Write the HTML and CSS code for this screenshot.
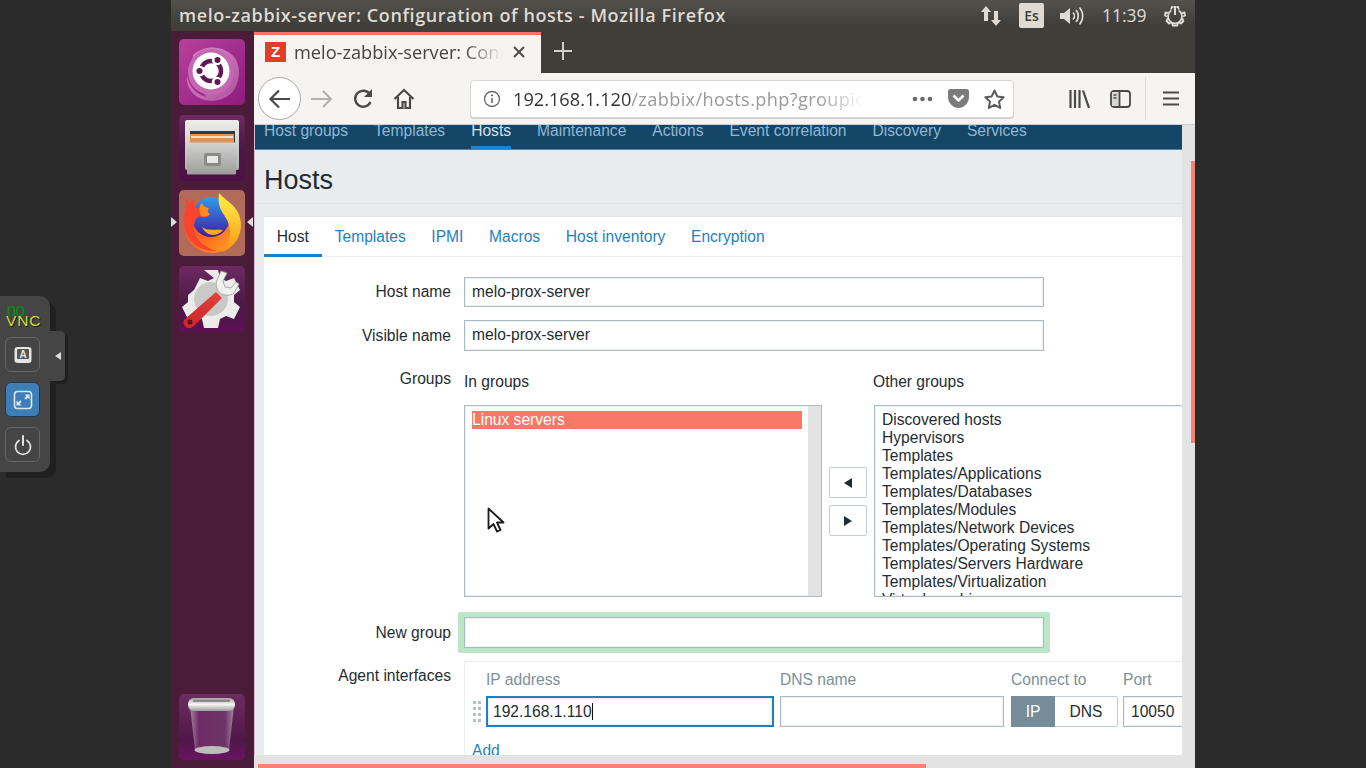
FILE: index.html
```html
<!DOCTYPE html>
<html lang="en">
<head>
<meta charset="utf-8">
<title>melo-zabbix-server: Configuration of hosts</title>
<link rel="stylesheet" href="styles.css">
</head>
<body>
<div class="outer-left">
  <aside class="vnc">
    <div class="vnc-logo"><span class="vnc-no">no</span><span class="vnc-name">VNC</span></div>
    <button class="vnc-btn"><svg width="24" height="24" viewBox="0 0 24 24"><rect x="3.500" y="4" width="17" height="16" rx="3" fill="#e4e4e4"/><rect x="6" y="6" width="12" height="10" rx="1" fill="#555"/><text x="12" y="14.500" class="vnc-key">A</text></svg></button>
    <button class="vnc-btn vnc-active"><svg width="24" height="24" viewBox="0 0 24 24"><rect x="3.500" y="3.500" width="17" height="17" rx="3" fill="none" stroke="#dbe6ef" stroke-width="1.600"/><path d="M13.500 6.500h5v5l-1.800-1.800-2 2-1.400-1.400 2-2zM10.500 17.500h-5v-5l1.800 1.800 2-2 1.400 1.400-2 2z" fill="#dbe6ef"/></svg></button>
    <button class="vnc-btn"><svg width="24" height="24" viewBox="0 0 24 24"><path d="M8 7.500a7.500 7.500 0 1 0 8 0" fill="none" stroke="#e0e0e0" stroke-width="1.800" stroke-linecap="round"/><path d="M12 3v9" stroke="#e0e0e0" stroke-width="2" stroke-linecap="round"/></svg></button>
    <div class="vnc-handle"><svg width="6" height="8" viewBox="0 0 6 8"><path d="M6 0v8L0 4z" fill="#ddd"/></svg></div>
  </aside>
</div>

<div class="screen">
  <header class="topbar">
    <div class="win-title">melo-zabbix-server: Configuration of hosts - Mozilla Firefox</div>
    <div class="tray">
      <svg class="tray-net" width="22" height="22" viewBox="0 0 22 22"><path d="M6 1l5 6H8v9H4V7H1zM14 6h4v9h3l-5 6-5-6h3z" fill="#dfdbd2"/></svg>
      <div class="tray-lang">Es</div>
      <svg class="tray-vol" width="27" height="20" viewBox="0 0 27 20"><path d="M1 7h4l6-5v16l-6-5H1z" fill="#dfdbd2"/><path d="M14 6.500a5 5 0 0 1 0 7M17 4a9 9 0 0 1 0 12M20.500 1.500a13 13 0 0 1 0 17" fill="none" stroke="#dfdbd2" stroke-width="1.700"/></svg>
      <div class="tray-clock">11:39</div>
      <svg class="tray-gear" width="22" height="22" viewBox="0 0 22 22"><path d="M7 4.500l1-2.500h1.500M15 4.500l-1-2.500h-1.500M4 8L1.500 7.500l-.5 3 2 1M18 8l2.500-.5.500 3-2 1M4 13l-1.500 3 2.500 2.500 2.500-1.500M18 13l1.500 3-2.500 2.500-2.500-1.500M8 17.500l.8 3h4.400l.8-3" fill="none" stroke="#dfdbd2" stroke-width="1.800"/><path d="M7.200 5.500a7 7 0 1 0 7.600 0" fill="none" stroke="#dfdbd2" stroke-width="1.800"/><path d="M11 1v9" stroke="#dfdbd2" stroke-width="2"/></svg>
    </div>
  </header>

  <div class="desk">
    <nav class="launcher">
      <div class="launch-top">
        <div class="launch-icon">
          <svg width="66" height="66" viewBox="0 0 66 66">
            <defs>
              <linearGradient id="ub" x1="0" y1="0" x2="1" y2="1"><stop offset="0" stop-color="#b8409c"/><stop offset="1" stop-color="#8d1c7e"/></linearGradient>
              <linearGradient id="ub2" x1="0" y1="0" x2="1" y2="1"><stop offset="0" stop-color="#dc8cc8"/><stop offset="1" stop-color="#b04fa0"/></linearGradient>
            </defs>
            <rect width="66" height="66" rx="5" fill="url(#ub)"/>
            <path d="M14 16C26 5 46 6 56 19c6 10 5 22-1 32-8 12-28 14-38 6-6-5-10-12-9-20 2 10 8 18 20 21C16 48 12 30 14 16z" fill="url(#ub2)"/>
            <circle cx="32" cy="33" r="23" fill="#c468b4"/>
            <circle cx="32" cy="32" r="18.500" fill="#fff"/>
            <circle cx="32" cy="32" r="10" fill="none" stroke="#5e1a58" stroke-width="4.500"/>
            <circle cx="21" cy="32" r="5.200" fill="#fff"/><circle cx="38" cy="21" r="5.200" fill="#fff"/><circle cx="38" cy="43" r="5.200" fill="#fff"/>
            <circle cx="20.500" cy="32" r="3" fill="#5e1a58"/><circle cx="38.500" cy="21" r="3" fill="#5e1a58"/><circle cx="38.500" cy="43" r="3" fill="#5e1a58"/>
          </svg>
        </div>
        <div class="launch-icon">
          <svg width="66" height="66" viewBox="0 0 66 66">
            <defs>
              <linearGradient id="fm" x1="0" y1="0" x2="0" y2="1"><stop offset="0" stop-color="#6e2a62"/><stop offset=".5" stop-color="#4a1845"/><stop offset="1" stop-color="#4d1046"/></linearGradient>
              <linearGradient id="dr" x1="0" y1="0" x2="0" y2="1"><stop offset="0" stop-color="#d2d2d0"/><stop offset="1" stop-color="#9c9c9a"/></linearGradient>
              <linearGradient id="fr" x1="0" y1="0" x2="0" y2="1"><stop offset="0" stop-color="#eeeeec"/><stop offset="1" stop-color="#b0b0ae"/></linearGradient>
            </defs>
            <rect width="66" height="66" rx="5" fill="url(#fm)"/>
            <rect x="6" y="5" width="54" height="50" rx="2" fill="url(#fr)"/>
            <rect x="11" y="16" width="45" height="14" fill="#3a3a38"/>
            <rect x="11" y="19" width="44" height="10" fill="#e29250"/>
            <rect x="12" y="21" width="42" height="2" fill="#f4e2cd"/>
            <rect x="8" y="27.500" width="49" height="32" rx="1" fill="url(#dr)"/>
            <rect x="25" y="38" width="17" height="13" rx="2" fill="#8b8b89"/>
            <rect x="28" y="41" width="11" height="7" rx="1" fill="#e8e8e6"/>
          </svg>
        </div>
        <div class="launch-icon">
          <svg width="66" height="66" viewBox="0 0 66 66">
            <defs>
              <linearGradient id="ff" x1="0" y1="0" x2="1" y2="1"><stop offset="0" stop-color="#ff3d3d"/><stop offset=".55" stop-color="#ff6a1f"/><stop offset="1" stop-color="#ffb01f"/></linearGradient>
              <linearGradient id="gl" x1="0" y1="0" x2="0" y2="1"><stop offset="0" stop-color="#2f9ce8"/><stop offset=".6" stop-color="#3a4fc0"/><stop offset="1" stop-color="#3b1f90"/></linearGradient>
              <linearGradient id="fl" x1="0" y1="0" x2="0" y2="1"><stop offset="0" stop-color="#fff04a"/><stop offset=".7" stop-color="#ffb322"/><stop offset="1" stop-color="#ff8a1f"/></linearGradient>
            </defs>
            <rect width="66" height="66" rx="5" fill="#b26b58"/>
            <circle cx="33" cy="35" r="28" fill="url(#ff)"/>
            <ellipse cx="32" cy="27" rx="19" ry="20" fill="url(#gl)"/>
            <path d="M40 3c5 7 22 13 22 32 0 14-10 25-20 27 9-7 12-20 6-32-4-8-10-12-8-27z" fill="url(#fl)"/>
            <path d="M10 9C6 20 3 28 6 38c3 16 18 24 32 23-12-3-21-11-23-21-1-7 2-12 5-14 4 2 8 2 10-2-3-2-4-4-2-7-6-2-9 2-11 1-2-4-3-6-1-9-5 2-7 4-9 6-1-2-1-4 0-6z" fill="#f9452f"/>
            <path d="M23 37c6 5 15 1 21 3-4 6-16 8-21-3z" fill="#ffa726"/>
            <path d="M22 13c3 3 5 5 8 5-2 3-1 5 1 6-2 3-5 3-9 2-2-4-2-9 0-13z" fill="#ff8a1f"/>
          </svg>
        </div>
        <div class="launch-icon">
          <svg width="66" height="66" viewBox="0 0 66 66">
            <defs>
              <linearGradient id="tl" x1="0" y1="0" x2="0" y2="1"><stop offset="0" stop-color="#6e2a62"/><stop offset=".6" stop-color="#4a1845"/><stop offset="1" stop-color="#5e1056"/></linearGradient>
              <linearGradient id="wr" x1="0" y1="1" x2="1" y2="0"><stop offset="0" stop-color="#c9252a"/><stop offset="1" stop-color="#e2423c"/></linearGradient>
            </defs>
            <rect width="66" height="66" rx="5" fill="url(#tl)"/>
            <path d="M25 4h14l2 8 6 3 8-3 6 12-6 5v7l6 5-6 12-8-3-6 3-2 9H25l-2-9-6-3-8 3-6-12 6-5v-7l6-5 6-12 8 3 6-3z" fill="#ececea"/>
            <circle cx="32" cy="33" r="17" fill="#c9c9c7"/>
            <path d="M7 61c-3-2-3-6-1-8l31-27 6 6-28 28c-2 2-6 3-8 1z" fill="url(#wr)"/>
            <circle cx="11" cy="56" r="2.500" fill="#5e1020"/>
            <path d="M42 5l-4 9c-2 5 0 10 3 13 4 3 10 3 14 0l5-9-3-2-5 6-6-1-2-6 4-8z" fill="#f1f1ef" stroke="#999" stroke-width=".8"/>
          </svg>
        </div>
      </div>
      <div class="launch-icon">
        <svg width="66" height="66" viewBox="0 0 66 66">
          <defs>
            <linearGradient id="tr" x1="0" y1="0" x2="0" y2="1"><stop offset="0" stop-color="#6b2d60"/><stop offset=".7" stop-color="#4f1749"/><stop offset="1" stop-color="#6a1464"/></linearGradient>
            <linearGradient id="bin" x1="0" y1="0" x2="1" y2="0"><stop offset="0" stop-color="#a884a2"/><stop offset=".2" stop-color="#6d2b66"/><stop offset=".8" stop-color="#6d3568"/><stop offset="1" stop-color="#a884a2"/></linearGradient>
            <linearGradient id="rim" x1="0" y1="0" x2="0" y2="1"><stop offset="0" stop-color="#a9a9a7"/><stop offset=".5" stop-color="#f4f4f2"/><stop offset="1" stop-color="#9a9a98"/></linearGradient>
          </defs>
          <rect width="66" height="66" rx="5" fill="url(#tr)"/>
          <path d="M11 12h44l-5 44c-6 3-28 3-34 0z" fill="url(#bin)"/>
          <ellipse cx="33" cy="56" rx="17.500" ry="4" fill="#bdbdbb"/>
          <rect x="9" y="4" width="47" height="13" rx="6" fill="url(#rim)"/>
          <rect x="14" y="5.500" width="37" height="2.500" rx="1" fill="#8a8a88"/>
        </svg>
      </div>
      <svg class="launch-mark launch-mark-l" width="6" height="10" viewBox="0 0 6 10"><path d="M0 0l6 5-6 5z" fill="#ddd"/></svg>
      <svg class="launch-mark launch-mark-r" width="6" height="10" viewBox="0 0 6 10"><path d="M6 0L0 5l6 5z" fill="#ddd"/></svg>
    </nav>

    <main class="browser">
      <div class="tabstrip">
        <div class="tab">
          <div class="favicon">Z</div>
          <div class="tab-title">melo-zabbix-server: Configuration of hosts</div>
          <svg class="tab-close" width="14" height="14" viewBox="0 0 14 14"><path d="M2 2l10 10M12 2L2 12" stroke="#4d4d4d" stroke-width="2"/></svg>
        </div>
        <svg class="newtab" width="18" height="18" viewBox="0 0 18 18"><path d="M9 0v18M0 9h18" stroke="#d0cfca" stroke-width="2"/></svg>
      </div>

      <div class="toolbar">
        <div class="back"><svg width="24" height="24" viewBox="0 0 24 24"><path d="M22 12H3M11 3.500L2.500 12l8.500 8.500" fill="none" stroke="#4a4a4a" stroke-width="2.200"/></svg></div>
        <svg class="tb-forward" width="22" height="20" viewBox="0 0 22 20"><path d="M0 10h20M12 2l8 8-8 8" fill="none" stroke="#b0b0ae" stroke-width="2"/></svg>
        <svg class="tb-reload" width="22" height="22" viewBox="0 0 22 22"><path d="M18.500 14a8 8 0 1 1-.5-7.500" fill="none" stroke="#4a4a4a" stroke-width="2.400"/><path d="M20 1v8h-8z" fill="#4a4a4a"/></svg>
        <svg class="tb-home" width="22" height="22" viewBox="0 0 22 22"><path d="M1.500 11L11 2l9.500 9M5 9v11h4.500v-6h3v6H17V9" fill="none" stroke="#4a4a4a" stroke-width="2.200"/></svg>
        <div class="urlbar">
          <svg class="url-info" width="18" height="18" viewBox="0 0 18 18"><circle cx="9" cy="9" r="7.500" fill="none" stroke="#666" stroke-width="1.300"/><path d="M9 8v5" stroke="#666" stroke-width="1.600"/><circle cx="9" cy="5.300" r="1.100" fill="#666"/></svg>
          <div class="url-text"><span class="url-host">192.168.1.120</span><span class="url-path">/zabbix/hosts.php?groupid=4</span></div>
          <svg class="url-more" width="21" height="6" viewBox="0 0 21 6"><circle cx="3" cy="3" r="2.300" fill="#6a6a6a"/><circle cx="10.500" cy="3" r="2.300" fill="#6a6a6a"/><circle cx="18" cy="3" r="2.300" fill="#6a6a6a"/></svg>
          <svg class="url-pocket" width="21" height="19" viewBox="0 0 21 19"><path d="M2.500 0h16A2.500 2.500 0 0 1 21 2.500V8c0 6-5 11-10.500 11S0 14 0 8V2.500A2.500 2.500 0 0 1 2.500 0z" fill="#7b7b7b"/><path d="M5.500 6.500l5 5 5-5" fill="none" stroke="#fff" stroke-width="2.600"/></svg>
          <svg class="url-star" width="21" height="20" viewBox="0 0 21 20"><path d="M10.500 1.500l2.800 5.900 6.300.8-4.600 4.400 1.200 6.300-5.700-3.100-5.700 3.100 1.200-6.300L1.400 8.200l6.300-.8z" fill="none" stroke="#5a5a5a" stroke-width="2" stroke-linejoin="round"/></svg>
        </div>
        <svg class="tb-library" width="21" height="18" viewBox="0 0 21 18"><path d="M1.500 0v18M6 0v18M10.500 0v18M14 .500l6 17.500" stroke="#4a4a4a" stroke-width="2.200" fill="none"/></svg>
        <svg class="tb-sidebar" width="21" height="18" viewBox="0 0 21 18"><rect x="1" y="1" width="19" height="16" rx="3" fill="none" stroke="#4a4a4a" stroke-width="1.800"/><rect x="2" y="2" width="7" height="14" fill="#d8d8d6"/><path d="M9.500 1v16" stroke="#4a4a4a" stroke-width="1.800"/><path d="M3.500 5h3M3.500 8h3" stroke="#4a4a4a" stroke-width="1.300"/></svg>
        <div class="tb-sep"></div>
        <svg class="tb-menu" width="16" height="15" viewBox="0 0 16 15"><path d="M0 1.500h16M0 7.500h16M0 13.500h16" stroke="#4a4a4a" stroke-width="2.200"/></svg>
      </div>

      <div class="page">
        <div class="content">
          <ul class="topnav">
            <li><a>Host groups</a></li>
            <li><a>Templates</a></li>
            <li><a class="topnav-on">Hosts</a></li>
            <li><a>Maintenance</a></li>
            <li><a>Actions</a></li>
            <li><a>Event correlation</a></li>
            <li><a>Discovery</a></li>
            <li><a>Services</a></li>
          </ul>
          <header class="head"><h1>Hosts</h1></header>
          <section class="card">
            <div class="tabs">
              <a class="tabs-on">Host</a>
              <a>Templates</a>
              <a>IPMI</a>
              <a>Macros</a>
              <a>Host inventory</a>
              <a>Encryption</a>
            </div>

            <div class="row row-first">
              <label class="lbl lbl-mid">Host name</label>
              <div class="text-input text-wide">melo-prox-server</div>
            </div>
            <div class="row row-second">
              <label class="lbl lbl-mid">Visible name</label>
              <div class="text-input text-wide text-31">melo-prox-server</div>
            </div>

            <div class="row row-groups">
              <label class="lbl lbl-groups">Groups</label>
              <div class="tween">
                <div class="tween-head">In groups</div>
                <div></div>
                <div class="tween-head">Other groups</div>
                <div class="listbox listbox-in">
                  <div class="listbox-items"><div class="opt-selected">Linux servers</div></div>
                  <div class="listbox-bar"></div>
                </div>
                <div class="tween-btns">
                  <button class="arrow"><svg width="8" height="10" viewBox="0 0 8 10"><path d="M8 0v10L0 5z" fill="#1f2c33"/></svg></button>
                  <button class="arrow"><svg width="8" height="10" viewBox="0 0 8 10"><path d="M0 0v10l8-5z" fill="#1f2c33"/></svg></button>
                </div>
                <div class="listbox listbox-other">
                  <div>Discovered hosts</div>
                  <div>Hypervisors</div>
                  <div>Templates</div>
                  <div>Templates/Applications</div>
                  <div>Templates/Databases</div>
                  <div>Templates/Modules</div>
                  <div>Templates/Network Devices</div>
                  <div>Templates/Operating Systems</div>
                  <div>Templates/Servers Hardware</div>
                  <div>Templates/Virtualization</div>
                  <div>Virtual machines</div>
                </div>
              </div>
            </div>

            <div class="row row-new">
              <label class="lbl lbl-mid">New group</label>
              <div class="highlight"><div class="text-input text-wide text-31"></div></div>
            </div>

            <div class="row row-agent">
              <label class="lbl lbl-agent">Agent interfaces</label>
              <div class="iface">
                <div class="iface-grid">
                  <div></div>
                  <div class="iface-head">IP address</div>
                  <div class="iface-head col-dns">DNS name</div>
                  <div class="iface-head col-conn">Connect to</div>
                  <div class="iface-head col-port">Port</div>
                  <svg class="drag" width="10" height="24" viewBox="0 0 10 24"><g fill="#b4c0c6"><rect x="1" y="1" width="3" height="3"/><rect x="6" y="1" width="3" height="3"/><rect x="1" y="7" width="3" height="3"/><rect x="6" y="7" width="3" height="3"/><rect x="1" y="13" width="3" height="3"/><rect x="6" y="13" width="3" height="3"/><rect x="1" y="19" width="3" height="3"/><rect x="6" y="19" width="3" height="3"/></g></svg>
                  <div class="text-input text-focus">192.168.1.110<span class="caret"></span></div>
                  <div class="text-input col-dns"></div>
                  <div class="toggle col-conn"><span class="toggle-on">IP</span><span class="toggle-off">DNS</span></div>
                  <div class="text-input col-port">10050</div>
                </div>
                <a class="add">Add</a>
              </div>
            </div>

            <svg class="cursor" width="18" height="26" viewBox="0 0 18 26"><path d="M1.500 1.500v20l5-4.500 3.500 7.500 3.500-1.500-3.500-7.500h6.500z" fill="#fff" stroke="#1a1a1a" stroke-width="1.800" stroke-linejoin="round"/></svg>
          </section>
        </div>
        <div class="vscroll"><div class="vthumb"></div></div>
        <div class="hscroll"><div class="hthumb"></div></div>
        <div class="corner"></div>
      </div>
    </main>
  </div>
</div>
</body>
</html>
```

FILE: styles.css
```css
* { box-sizing: border-box; }
html, body { margin: 0; padding: 0; height: 100%; }
body {
  width: 1366px;
  height: 768px;
  overflow: hidden;
  display: flex;
  background: #2b2b2b;
  font-family: "Liberation Sans", Arial, sans-serif;
  font-size: 15.600px;
  color: #1f2c33;
}

/* noVNC side panel */
.outer-left { width: 171px; flex: none; position: relative; }
.vnc {
  position: absolute;
  left: 0;
  top: 296px;
  width: 50px;
  height: 176px;
  background: #454545;
  border-radius: 0 10px 10px 0;
  box-shadow: 6px 6px 0 #202020;
  display: flex;
  flex-direction: column;
  align-items: flex-start;
  padding: 9px 0 0 5px;
}
.vnc-logo { height: 32px; width: 40px; line-height: 1; }
.vnc-no {
  display: block;
  font: 18px/10px "DejaVu Sans Mono", monospace;
  letter-spacing: -2px;
  color: #0a8a12;
  margin-left: 1px;
}
.vnc-name {
  display: block;
  font: 15.500px/12px "Liberation Sans", sans-serif;
  letter-spacing: .8px;
  color: #d9d936;
  text-shadow: 1px 1px 0 #1b1b1b;
  margin-left: 1px;
}
.vnc-btn {
  width: 35px;
  height: 35px;
  margin: 0 0 10px;
  padding: 0;
  display: flex;
  align-items: center;
  justify-content: center;
  background: transparent;
  border: 1px solid #666;
  border-radius: 6px;
}
.vnc-active { background: #3d7eb6; border-color: #1f3a52; }
.vnc-key { font: bold 10px "Liberation Sans", sans-serif; fill: #e4e4e4; text-anchor: middle; }
.vnc-handle {
  position: absolute;
  left: 50px;
  top: 35px;
  width: 15px;
  height: 50px;
  background: #454545;
  border-radius: 0 5px 5px 0;
  box-shadow: 3px 3px 0 #202020;
  display: flex;
  align-items: center;
  padding-left: 5px;
}

/* Ubuntu desktop */
.screen { width: 1024px; flex: none; height: 768px; display: flex; flex-direction: column; }
.topbar {
  height: 31px;
  flex: none;
  display: flex;
  align-items: center;
  background: linear-gradient(#53524d, #3f3e39 80%);
  color: #dfdbd2;
  padding-left: 8px;
}
.win-title { font: 600 18px/31px "Open Sans", sans-serif; letter-spacing: .6px; color: #dfdbd2; white-space: nowrap; flex: none; width: 548px; }
.tray { margin-left: auto; display: flex; align-items: center; width: 215px; height: 31px; }
.tray-net { margin-right: 17px; flex: none; }
.tray-lang {
  width: 25px;
  height: 25px;
  flex: none;
  background: #dfdbd2;
  border-radius: 2px;
  color: #3f3e39;
  font: 600 14px/25px "Open Sans", sans-serif;
  text-align: center;
  margin-right: 15px;
}
.tray-vol { margin-right: 16px; flex: none; }
.tray-clock { font: 17.500px/31px "Open Sans", sans-serif; width: 46px; margin-right: 16px; white-space: nowrap; flex: none; }
.tray-gear { flex: none; }

.desk { flex: 1; min-height: 0; display: flex; }
.launcher {
  position: relative;
  width: 83px;
  flex: none;
  background: #4a1c3a;
  padding: 8px 9px 8px 8px;
  display: flex;
  flex-direction: column;
  justify-content: space-between;
}
.launch-top { display: flex; flex-direction: column; gap: 9.500px; }
.launch-icon { width: 66px; height: 66px; flex: none; }
.launch-icon svg { display: block; }
.launch-mark { position: absolute; top: 186px; }
.launch-mark-l { left: 0; }
.launch-mark-r { right: 1px; }

/* Firefox chrome */
.browser { flex: 1; min-width: 0; display: flex; flex-direction: column; }
.tabstrip { height: 42px; flex: none; background: #3f3e39; display: flex; align-items: stretch; }
.tab {
  width: 287px;
  background: #f5f4f2;
  border-top: 3px solid #f2775f;
  margin-top: 1px;
  display: flex;
  align-items: center;
  padding: 0 0 4px 11px;
}
.favicon {
  width: 21px;
  height: 20px;
  flex: none;
  background: #e33d27;
  color: #fff;
  font: bold 15px/20px "Liberation Sans", sans-serif;
  text-align: center;
}
.tab-title {
  width: 209px;
  margin-left: 8px;
  flex: none;
  overflow: hidden;
  white-space: nowrap;
  font: 18.200px/24px "Open Sans", sans-serif;
  color: #444;
  -webkit-mask-image: linear-gradient(90deg, #000 170px, transparent 209px);
  mask-image: linear-gradient(90deg, #000 170px, transparent 209px);
}
.tab-close { margin-left: 9px; flex: none; }
.newtab { margin: 11px 0 0 13px; flex: none; }
.toolbar {
  height: 52px;
  flex: none;
  background: #f5f4f2;
  border-bottom: 1px solid #cfcfcd;
  display: flex;
  align-items: center;
  padding-left: 4px;
}
.back {
  width: 43px;
  height: 43px;
  border-radius: 50%;
  background: #fff;
  border: 1px solid #a8a8a6;
  display: flex;
  align-items: center;
  justify-content: center;
  flex: none;
}
.tb-forward { margin-left: 10px; flex: none; }
.tb-reload { margin-left: 19px; flex: none; }
.tb-home { margin-left: 19px; flex: none; }
.urlbar {
  width: 544px;
  height: 38px;
  margin-left: 55px;
  flex: none;
  background: #fff;
  border: 1px solid #d6d6d4;
  border-radius: 4px;
  box-shadow: 0 1px 0 #d0d0ce;
  display: flex;
  align-items: center;
  padding-left: 12px;
}
.url-text {
  width: 358px;
  margin-left: 12px;
  flex: none;
  overflow: hidden;
  white-space: nowrap;
  font: 18.200px/26px "Open Sans", sans-serif;
  color: #9a9a9a;
  -webkit-mask-image: linear-gradient(90deg, #000 305px, transparent 352px);
  mask-image: linear-gradient(90deg, #000 305px, transparent 352px);
}
.url-host { color: #333; }
.url-path { letter-spacing: .35px; }
.url-more { margin-left: 41px; flex: none; }
.url-pocket { margin-left: 15px; flex: none; }
.url-star { margin-left: 15px; flex: none; }
.tb-library { margin-left: 55px; flex: none; }
.tb-sidebar { margin-left: 20px; flex: none; }
.tb-sep { width: 1px; height: 43px; background: #dcdcda; margin-left: 14px; flex: none; }
.tb-menu { margin-left: 17px; flex: none; }

/* Page */
.page {
  flex: 1;
  min-height: 0;
  display: grid;
  grid-template-columns: 928px 13px;
  grid-template-rows: 630px 13px;
  background: #e3e3e3;
}
.content { overflow: hidden; background: #e9ecee; border-left: 1px solid #d9bcd2; position: relative; }
.vscroll { background: #e3e3e3; }
.vthumb { width: 4px; height: 282px; margin: 36px 0 0 9px; background: #f4846f; }
.hscroll { background: #e3e3e3; }
.hthumb { width: 668px; height: 4px; margin: 9px 0 0 4px; background: #f4846f; }
.corner { background: #e3e3e3; }

.topnav {
  list-style: none;
  margin: 0;
  padding: 0 0 0 9px;
  height: 25px;
  background: #154668;
  border-bottom: 1px solid #5c829c;
  display: flex;
  gap: 26px;
  overflow: hidden;
}
.topnav a {
  display: block;
  height: 24px;
  margin-top: -3px;
  line-height: 18px;
  color: #8fb7d2;
  white-space: nowrap;
}
.topnav .topnav-on { color: #d3e2ec; border-bottom: 3px solid #1f83c9; height: 27px; }
.head { height: 54px; border-bottom: 1px solid #dfe4e7; padding: 14px 0 0 9px; }
h1 { margin: 0; font-weight: 400; font-size: 27px; line-height: 32px; color: #1f2c33; }

.card {
  position: relative;
  margin: 12px 0 0 9px;
  height: 600px;
  background: #fff;
  border-top: 1px solid #dfe4e7;
}
.tabs { height: 40px; display: flex; border-bottom: 1px solid #ebeef0; }
.tabs a { padding: 0 12.800px; line-height: 40px; color: #1f7fc1; white-space: nowrap; height: 40px; }
.tabs .tabs-on { color: #1f2c33; border-bottom: 3px solid #1f7fc1; padding-right: 13px; }

.row { display: flex; }
.lbl { width: 187px; margin-right: 13px; flex: none; text-align: right; line-height: 18px; white-space: nowrap; }
.lbl-mid { align-self: center; }
.row-first { margin-top: 20px; }
.row-second { margin-top: 13px; }
.row-groups { margin-top: 21px; }
.row-new { margin-top: 15px; }
.row-agent { margin-top: 8px; }
.lbl-groups { margin-top: -2px; }
.lbl-agent { margin-top: 6px; }

.text-input {
  height: 30px;
  background: #fff;
  border: 1px solid #acbbc3;
  box-shadow: inset 0 0 0 1px #eef1f3;
  padding: 0 6px 0 7px;
  line-height: 27px;
  white-space: nowrap;
  overflow: hidden;
}
.text-wide { width: 580px; }
.text-31 { height: 31px; }
.text-focus { border: 2px solid #1f7fc1; padding-left: 5px; }
.iface-grid .text-input { height: 31px; line-height: 29px; }
.iface-grid .text-focus { line-height: 27px; }
.caret { display: inline-block; width: 1px; height: 17px; background: #111; vertical-align: -3px; }

.tween { display: grid; grid-template-columns: 358px 51px 330px; grid-template-rows: 33px 192px; }
.tween-head { line-height: 18px; white-space: nowrap; margin-top: 1px; }
.listbox {
  height: 192px;
  background: #fff;
  border: 1px solid #acbbc3;
  box-shadow: inset 0 0 0 1px #eef1f3;
  overflow: hidden;
  line-height: 17px;
  white-space: nowrap;
}
.listbox-in { display: flex; }
.listbox-items { flex: 1; padding: 5px 6px 0 7px; }
.opt-selected { background: #f77866; color: #fff; height: 18px; }
.listbox-bar { width: 13px; background: #e3e3e3; flex: none; }
.listbox-other { padding: 5px 0 0 7px; margin-left: 1px; }
.listbox-other div { height: 18px; }
.tween-btns { display: flex; flex-direction: column; gap: 7px; justify-content: center; padding: 1px 0 0 7px; }
.arrow {
  width: 38px;
  height: 31px;
  padding: 0;
  background: #fff;
  border: 1px solid #c3ced4;
  border-radius: 2px;
  display: flex;
  align-items: center;
  justify-content: center;
}

.highlight { margin-left: -6px; padding: 5px 6px; background: #bde5c8; border-radius: 2px; height: 41px; }

.iface {
  flex: 1;
  min-width: 0;
  height: 110px;
  border-top: 1px solid #ebeef0;
  border-left: 1px solid #ebeef0;
  padding: 9px 0 0 6px;
}
.iface-grid {
  display: grid;
  grid-template-columns: 15px 288px 230px 114px 90px;
  grid-template-rows: 25px 31px;
}
.col-dns { margin-left: 6px; }
.col-conn { margin-left: 7px; }
.col-port { margin-left: 5px; }
.iface-head { color: #7e909b; line-height: 18px; white-space: nowrap; }
.drag { margin: 4px 0 0 1px; display: block; }
.toggle { display: flex; height: 31px; border: 1px solid #c3ced4; border-radius: 2px; width: 107px; line-height: 29px; text-align: center; }
.toggle-on { width: 44px; background: #768d99; color: #fff; margin: -1px 0 -1px -1px; line-height: 31px; }
.toggle-off { flex: 1; color: #1f2c33; }
.add { display: block; margin: 15px 0 0 1px; line-height: 18px; color: #1f7fc1; }

.cursor { position: absolute; left: 223px; top: 290px; }
```
